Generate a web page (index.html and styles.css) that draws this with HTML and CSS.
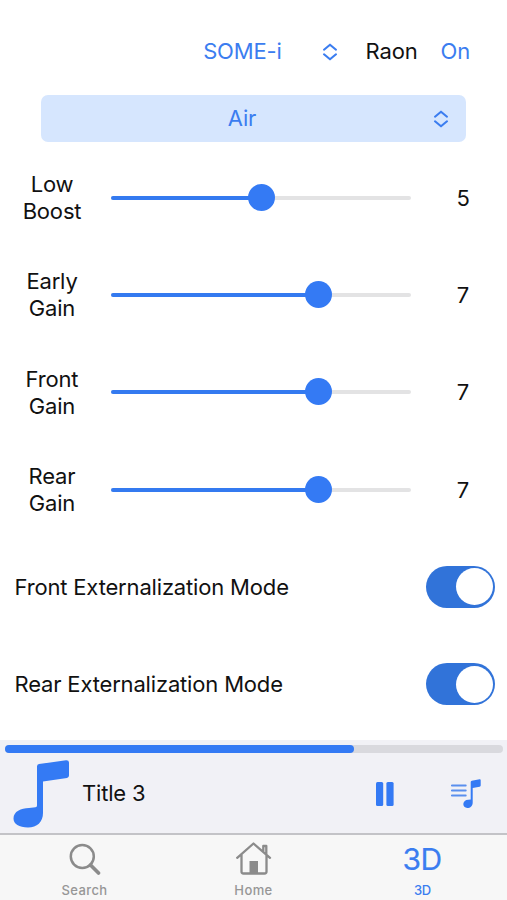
FILE: index.html
```html
<!DOCTYPE html>
<html lang="en">
<head>
<meta charset="utf-8">
<title>3D</title>
<link rel="stylesheet" href="styles.css">
</head>
<body>
<main class="app">
  <header class="top">
    <span class="device">SOME-i</span>
    <svg class="chev chev-top" viewBox="0 0 16 18"><path d="M2 6.700 8 1.700l6 5M2 11.300l6 5 6-5"/></svg>
    <span class="brand">Raon</span>
    <span class="state">On</span>
  </header>
  <div class="preset">
    <span class="preset-name">Air</span>
    <svg class="chev" viewBox="0 0 16 18"><path d="M2 6.700 8 1.700l6 5M2 11.300l6 5 6-5"/></svg>
  </div>
  <section class="rows">
    <div class="row"><span class="label">Low<br>Boost</span><div class="slider"><div class="fill" style="width:50%"></div><div class="thumb"></div></div><span class="value">5</span></div>
    <div class="row"><span class="label">Early<br>Gain</span><div class="slider"><div class="fill" style="width:69%"></div><div class="thumb"></div></div><span class="value">7</span></div>
    <div class="row"><span class="label">Front<br>Gain</span><div class="slider"><div class="fill" style="width:69%"></div><div class="thumb"></div></div><span class="value">7</span></div>
    <div class="row"><span class="label">Rear<br>Gain</span><div class="slider"><div class="fill" style="width:69%"></div><div class="thumb"></div></div><span class="value">7</span></div>
    <div class="row mode"><span class="mode-name">Front Externalization Mode</span><div class="switch"><div class="knob"></div></div></div>
    <div class="row mode"><span class="mode-name">Rear Externalization Mode</span><div class="switch"><div class="knob"></div></div></div>
  </section>
  <section class="player">
    <div class="progress"><div class="played" style="width:70%"></div></div>
    <div class="track">
      <svg class="note" viewBox="0 0 58 70"><path d="M24 6.500Q24 4.500 26 4.100L53 .2Q56 0 56 2.500V15.500Q56 17.500 54 17.900L30 21.500V53C30 62 24 67.500 15 67.500C6 67.500.5 64 .5 58.500C.5 51.500 8 48 16 48L22.500 47.300Q24 47 24 45.500Z"/></svg>
      <span class="title">Title 3</span>
      <svg class="pause" viewBox="0 0 18 24"><rect width="7.200" height="24" rx="1.500"/><rect x="10.400" width="7.200" height="24" rx="1.500"/></svg>
      <svg class="queue" viewBox="0 0 30 30"><path class="lines" d="M.8 6.500h14M.8 11.500h14M.8 16.500h14"/><path d="M19.700 3Q19.700 1.900 20.800 1.700L28.600.3Q29.700.1 29.700 1.200V6.500Q29.700 7.600 28.600 7.800L21.700 9V23.500C21.700 27 19.500 29 16.300 29C13.800 29 12.300 27.300 12.300 25.100C12.300 22.500 14.500 20.800 17.200 20.700L19.700 20.400Z"/></svg>
    </div>
  </section>
  <nav class="tabs">
    <div class="tab"><svg class="icon" viewBox="0 0 36 36"><circle cx="15.300" cy="15.500" r="11.500" stroke-width="2.500"/><path d="m23.500 24 8 8" stroke-width="3.800"/></svg><span>Search</span></div>
    <div class="tab"><svg class="icon" viewBox="0 0 36 36"><path d="M1.200 16.800 17.500 2.500l16.500 14.300M5.500 13.500v17Q5.500 32.500 7.500 32.500H28.500Q30.500 32.500 30.500 30.500V13.500M27.300 10.500V5H30.300V13"/><path class="door" d="M13.500 20h8.500v12h-8.500z"/></svg><span>Home</span></div>
    <div class="tab active"><b class="big">3D</b><span>3D</span></div>
  </nav>
</main>
</body>
</html>
```
FILE: styles.css
```css
* { box-sizing: border-box; }
body { margin: 0; background: #fff; color: #111; font: 22px/27px Inter, sans-serif; letter-spacing: -0.17px; }
svg { display: block; flex: none; }
.app { width: 507px; height: 900px; display: flex; flex-direction: column; overflow: hidden; }
.top { height: 95px; padding: 8px 37px 0 0; display: flex; align-items: center; justify-content: flex-end; color: #3b7df0; }
.chev { width: 16px; height: 18px; fill: none; stroke: #3b7df0; stroke-width: 2.1; stroke-linecap: round; stroke-linejoin: round; }
.chev-top { margin: 0 28px 0 40px; }
.brand { color: #111; margin-right: 23px; }
.preset { height: 47px; margin: 0 41px; padding: 0 18px 0 0; border-radius: 7px; background: #d6e6fe; color: #3b7df0; display: flex; align-items: center; }
.preset-name { flex: 1; text-align: center; padding-left: 10px; }
.preset .chev { margin-right: -1px; }
.rows { margin-top: 7px; display: grid; grid-template-columns: 100%; grid-auto-rows: 97.300px; }
.row { display: flex; align-items: center; }
.label { width: 104px; flex: none; text-align: center; padding-top: 1px; }
.slider { width: 300px; flex: none; height: 4px; margin-left: 7px; border-radius: 2px; background: #e3e3e4; display: flex; align-items: center; }
.fill { height: 4px; border-radius: 2px; background: #347af0; flex: none; }
.thumb { width: 27px; height: 27px; margin: -1px 0 0 -13.500px; border-radius: 50%; background: #347af4; flex: none; }
.value { width: 104px; flex: none; text-align: center; padding-top: 1px; }
.mode { justify-content: space-between; padding: 0 12px 0 14.500px; }
.mode-name { padding-top: 1px; }
.switch { width: 69px; height: 42px; padding: 2px; border-radius: 21px; background: #3173d9; display: flex; justify-content: flex-end; align-items: center; }
.knob { width: 37px; height: 37px; border-radius: 50%; background: #fff; }
.player { margin-top: auto; flex: none; height: 95px; background: #f1f1f6; border-bottom: 2px solid #c3c3c7; padding: 5px 4px 0 5px; }
.progress { height: 8px; border-radius: 4px; background: #d9d9de; }
.played { height: 8px; border-radius: 4px; background: #347af4; }
.track { height: 81px; display: flex; align-items: center; padding: 0 22px 0 8px; }
.note { width: 58px; height: 70px; fill: #347af4; margin-top: 3px; }
.title { margin-left: 11px; flex: 1; }
.pause { width: 18px; height: 24px; fill: #347af4; margin-right: 57px; }
.queue { width: 30px; height: 30px; fill: #347af4; }
.lines { fill: none; stroke: #5a8fee; stroke-width: 1.8; stroke-linecap: round; }
.tabs { flex: none; height: 65px; background: #f7f7f7; display: grid; grid-template-columns: repeat(3, 1fr); }
.tab { display: flex; flex-direction: column; align-items: center; justify-content: space-between; padding: 6px 0 2px; color: #969696; font-size: 13px; line-height: 16px; font-weight: 500; letter-spacing: 0.4px; }
.icon { width: 36px; height: 36px; fill: none; stroke: #8b8b8b; stroke-width: 2.3; stroke-linecap: round; stroke-linejoin: round; }
.door { fill: #8b8b8b; stroke: none; }
.active { color: #3b7df0; letter-spacing: -0.2px; }
.big { font-size: 30px; line-height: 37px; font-weight: 400; letter-spacing: -0.5px; margin-right: 1px; -webkit-text-stroke: 0.200px #3b7df0; }
```
